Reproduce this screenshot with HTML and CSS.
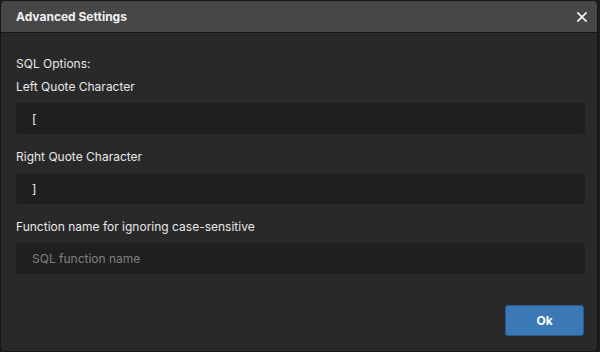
FILE: index.html
```html
<!DOCTYPE html>
<html lang="en">
<head>
<meta charset="UTF-8">
<meta name="viewport" content="width=device-width, initial-scale=1.0">
<title>Advanced Settings</title>
<link rel="stylesheet" href="styles.css">
</head>
<body>
<div class="dialog">
  <div class="dialog-header">
    <span class="dialog-title">Advanced Settings</span>
    <button class="close-btn" aria-label="Close">
      <svg width="10" height="10" viewBox="0 0 10 10"><path d="M1 1 L9 9 M9 1 L1 9" stroke="#fff" stroke-width="1.6" stroke-linecap="square"/></svg>
    </button>
  </div>
  <div class="dialog-body">
    <div class="section-title">SQL Options:</div>
    <label class="field-label">Left Quote Character</label>
    <input class="field-input" type="text" value="[">
    <label class="field-label">Right Quote Character</label>
    <input class="field-input" type="text" value="]">
    <label class="field-label">Function name for ignoring case-sensitive</label>
    <input class="field-input" type="text" placeholder="SQL function name">
  </div>
  <div class="dialog-footer">
    <button class="ok-btn">Ok</button>
  </div>
</div>
</body>
</html>
```

FILE: styles.css
```css
html, body {
  margin: 0;
  padding: 0;
  height: 100%;
  background-color: #1c1c1c;
  font-family: Inter, 'Noto Sans', sans-serif;
  font-size: 12px;
  color: #e8e8e8;
}

.dialog {
  box-sizing: border-box;
  height: 352px;
  margin: 0 2px 0 0;
  display: flex;
  flex-direction: column;
  background-color: #292929;
  border: 1px solid #161616;
  border-radius: 5px;
  overflow: hidden;
}

.dialog-header {
  height: 31px;
  display: flex;
  align-items: center;
  justify-content: space-between;
  padding: 0 10px 0 15px;
  background-color: #474747;
  border-bottom: 1px solid #161616;
}

.dialog-title {
  font-weight: 700;
  color: #f2f2f2;
}

.close-btn {
  border: none;
  background: none;
  padding: 0;
  display: flex;
  cursor: pointer;
}

.dialog-body {
  display: flex;
  flex-direction: column;
  padding: 23px 12px 0 15px;
}

.section-title {
  line-height: 16px;
  margin-bottom: 7px;
}

.field-label {
  line-height: 16px;
  margin-bottom: 8px;
}

.field-input {
  box-sizing: border-box;
  height: 31px;
  margin-bottom: 15px;
  padding: 0 16px;
  border: none;
  border-radius: 4px;
  background-color: #1f1f1f;
  color: #f0f0f0;
  font-family: inherit;
  font-size: 12px;
  outline: none;
}

.field-input:last-child {
  margin-bottom: 0;
}

.field-input::placeholder {
  color: #808080;
}

.dialog-footer {
  display: flex;
  justify-content: flex-end;
  padding: 31px 13px 0 0;
}

.ok-btn {
  width: 79px;
  height: 31px;
  border: 1px solid #2a5a8a;
  border-radius: 3px;
  background-color: #3b78b6;
  color: #fff;
  font-family: inherit;
  font-size: 12px;
  font-weight: 700;
  cursor: pointer;
}
```
